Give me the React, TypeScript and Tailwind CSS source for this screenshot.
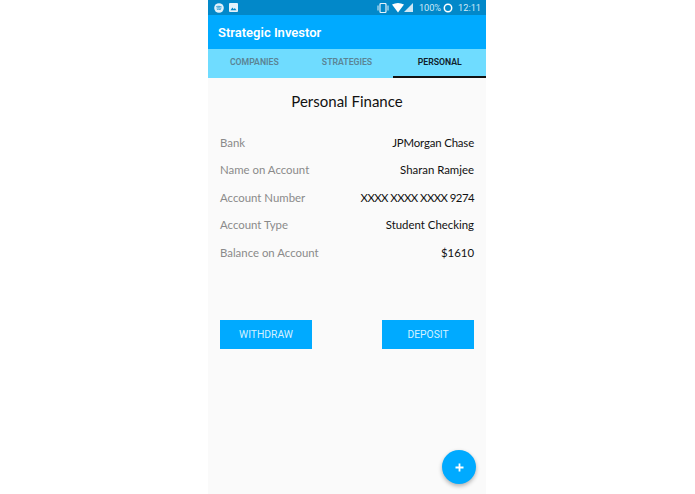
import React from "react";

const rows = [
  ["Bank", "JPMorgan Chase", "tracking-[-0.15px]"],
  ["Name on Account", "Sharan Ramjee", ""],
  ["Account Number", "XXXX XXXX XXXX 9274", "tracking-[-0.55px]"],
  ["Account Type", "Student Checking", ""],
  ["Balance on Account", "$1610", ""],
];

function StatusBar() {
  return (
    <div className="h-[15px] bg-[#0288c9] flex items-center justify-between pl-[6px] pr-[5px] text-white">
      <div className="flex items-center gap-[5px]">
        <svg width="10" height="10" viewBox="0 0 10 10">
          <circle cx="5" cy="5" r="4.8" fill="#e3f2fb" />
          <path d="M2.3 3.6c1.8-.5 3.6-.4 5.4.4M2.6 5c1.5-.4 3-.3 4.6.4M2.9 6.3c1.3-.3 2.5-.2 3.8.3" stroke="#0288c9" strokeWidth="0.8" fill="none" />
        </svg>
        <svg width="9" height="9" viewBox="0 0 9 9">
          <rect width="9" height="9" rx="1" fill="#e3f2fb" />
          <path d="M1.5 7.3L3.4 4.6 4.8 6.2 5.8 5.1 7.5 7.3z" fill="#0288c9" />
        </svg>
      </div>
      <div className="flex items-center text-[9.2px] leading-none text-[#cfe9f7] font-['Roboto',sans-serif]">
        <svg width="12" height="10" viewBox="0 0 12 10" className="mr-[3px]">
          <rect x="3" y="0.5" width="6" height="9" rx="1" fill="none" stroke="#e3f2fb" strokeWidth="1.2" />
          <path d="M1 2.5v5M11 2.5v5" stroke="#e3f2fb" strokeWidth="1" />
        </svg>
        <svg width="12" height="10" viewBox="0 0 12 10" className="mr-[0px]">
          <path d="M0 1.5Q6-1.5 12 1.5L6 9.5z" fill="#fff" />
        </svg>
        <svg width="9" height="9" viewBox="0 0 9 9" className="mr-[6px]">
          <path d="M9 0V9H0z" fill="#cfe8f6" />
        </svg>
        <span className="mr-[2px]">100%</span>
        <svg width="10" height="10" viewBox="0 0 10 10" className="mr-[5px]">
          <circle cx="5" cy="5" r="3.7" fill="none" stroke="#fff" strokeWidth="1.5" />
        </svg>
        <span>12:11</span>
      </div>
    </div>
  );
}

function Tab({ label, active }: { label: string; active?: boolean }) {
  return (
    <div
      className={
        "flex-1 flex items-center justify-center text-[8.7px] font-semibold border-b-2 " +
        (active ? "text-[#10202a] border-[#111]" : "text-[#5b8494] border-transparent")
      }
    >
      {label}
    </div>
  );
}

export default function App() {
  return (
    <div className="w-[695px] h-[494px] bg-white flex justify-center font-['Roboto',sans-serif]">
      <div className="relative w-[278px] h-[494px] bg-[#fafafa] flex flex-col ml-[-1px]">
        <StatusBar />
        <div className="h-[34px] bg-[#00aaff] flex items-center pl-[10px] pt-[1px] text-white text-[13px] font-semibold">
          Strategic Investor
        </div>
        <div className="h-[29px] bg-[#6fdcff] flex">
          <Tab label="COMPANIES" />
          <Tab label="STRATEGIES" />
          <Tab label="PERSONAL" active />
        </div>
        <div className="text-center text-[15px] text-[#111] mt-[13px] leading-[20px] font-['Lato',sans-serif]">Personal Finance</div>
        <div className="flex flex-col gap-[7px] pl-[12px] pr-[12px] mt-[22px] text-[11.4px] leading-[20.4px] font-['Lato',sans-serif]">
          {rows.map(([k, v, t]) => (
            <div key={k} className="flex justify-between">
              <span className="text-[#8a8a8a]">{k}</span>
              <span className={"text-[#111] " + t}>{v}</span>
            </div>
          ))}
        </div>
        <div className="flex justify-between pl-[12px] pr-[12px] mt-[57px]">
          <button className="w-[92px] h-[29px] bg-[#00aaff] text-[#d4f1ff] text-[10.3px]">WITHDRAW</button>
          <button className="w-[92px] h-[29px] bg-[#00aaff] text-[#d4f1ff] text-[10.3px]">DEPOSIT</button>
        </div>
        <div className="absolute right-[10px] bottom-[10px] w-[34px] h-[34px] rounded-full bg-[#00aaff] shadow-[0_2px_4px_rgba(0,0,0,0.3)] flex items-center justify-center">
          <svg width="9" height="9" viewBox="0 0 9 9">
            <path d="M4.5 0.5v8M0.5 4.5h8" stroke="#fff" strokeWidth="1.8" />
          </svg>
        </div>
      </div>
    </div>
  );
}
